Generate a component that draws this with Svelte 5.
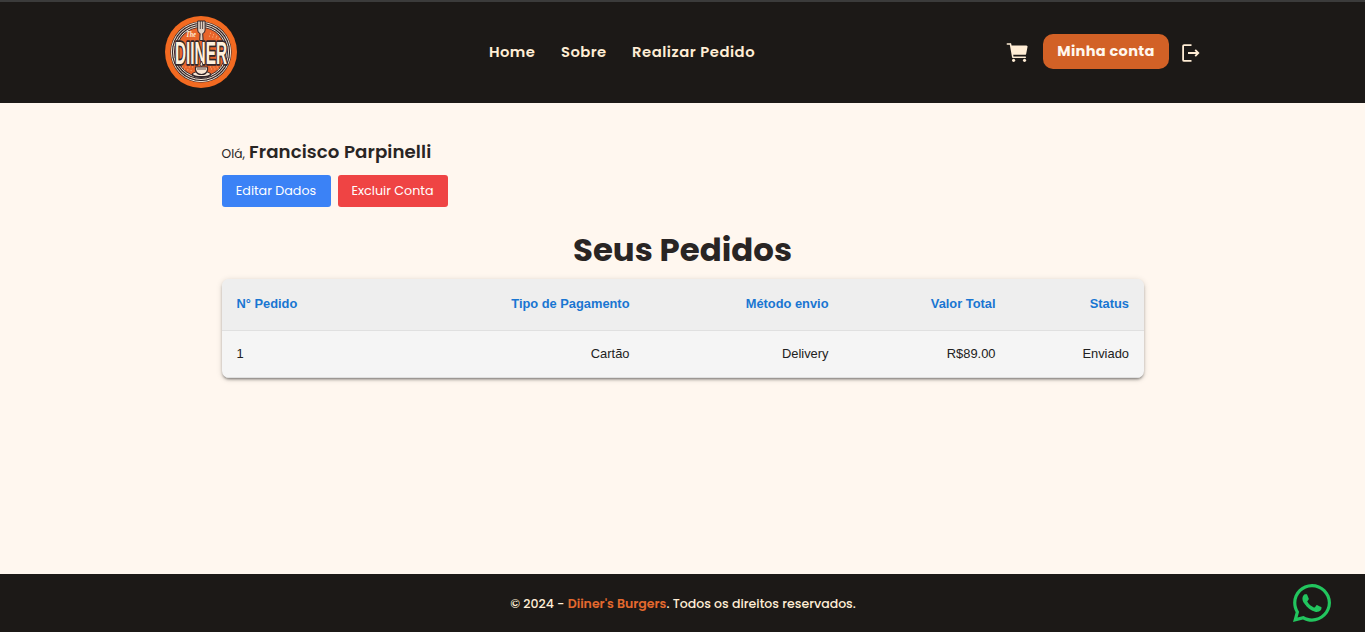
<script>
  const orders = [
    { id: 1, payment: 'Cartão', shipping: 'Delivery', total: 'R$89.00', status: 'Enviado' }
  ];
</script>

<div class="page">
  <header>
    <div class="bar">
      <svg class="logo" viewBox="0 0 72 72" role="img" aria-label="The Diiner">
        <circle cx="36" cy="36" r="36" fill="#f26a21" />
        <circle cx="36" cy="36" r="30.6" fill="#33262a" />
        <g fill="none" stroke="#f5e5d3" stroke-width="1">
          <circle cx="36" cy="36" r="29.6" />
          <circle cx="36" cy="36" r="27.5" />
          <circle cx="36" cy="36" r="25.5" />
        </g>
        <circle cx="36" cy="36" r="24.3" fill="#e9652b" />
        <g fill="none" stroke="#f9b27c" stroke-width="1.2" stroke-dasharray="1 2.4">
          <path d="M45 17l8 4M44 20l11 3M19 53l9 2M46 53h8M17 51h11M45 51h11" />
        </g>
        <text class="script" x="21" y="20.5" textLength="10" lengthAdjust="spacingAndGlyphs">The</text>
        <text class="word" x="10" y="48" textLength="52" lengthAdjust="spacingAndGlyphs">DIINER</text>
        <path d="M32.7 5v9q0 3 2.400 3.500l-.4 7h3.400l-.4-7q2.400-.5 2.400-3.500V5z" fill="#e3d3c4" stroke="#33262a" stroke-width="1" />
        <path d="M35.300 5v8M37.600 5v8" stroke="#33262a" stroke-width=".8" />
        <ellipse cx="36.500" cy="58.500" rx="10" ry="3.500" fill="#33262a" />
        <ellipse cx="36.500" cy="58" rx="8.500" ry="2" fill="#f8e5d2" />
        <path d="M30.500 51h12v3q-1 4.500-6 4.500t-6-4.500z" fill="#f8e5d2" stroke="#33262a" stroke-width="1.200" />
        <path d="M32 53h9" stroke="#33262a" stroke-width=".8" />
        <path d="M36.500 45q-3 3.500 0 6 2.500-2.500 0-6" fill="#f8e5d2" stroke="#33262a" stroke-width=".9" />
      </svg>
      <nav>
        <a class="n1" href="#home">Home</a>
        <a class="n2" href="#sobre">Sobre</a>
        <a class="n3" href="#pedido">Realizar Pedido</a>
      </nav>
      <div class="actions">
        <svg class="cart" viewBox="0 0 512 512" fill="#ffedd5">
          <circle cx="176" cy="416" r="32" /><circle cx="400" cy="416" r="32" />
          <path d="M456.8 120.8a24 24 0 0 0-18.6-8.8H133.9l-6.1-34.8A16 16 0 0 0 112 64H48a16 16 0 0 0 0 32h50.6l45.7 258.8A16 16 0 0 0 160 368h256a16 16 0 0 0 0-32H173.4l-5.6-32h241.6A24 24 0 0 0 433 284.7l28.8-144a24 24 0 0 0-5-19.9z" />
        </svg>
        <button class="account">Minha conta</button>
        <svg class="logout" viewBox="0 0 18 18" fill="none" stroke="#ffedd5" stroke-width="1.8">
          <path d="M9.500 1.100H2.100Q1.100 1.100 1.100 2.100v13.800q0 1 1 1H9.500M6 9h10.200M13.200 5.900 16.300 9l-3.100 3.100" />
        </svg>
      </div>
    </div>
  </header>

  <main>
    <p class="hello"><span class="ola">Olá,</span><strong>Francisco Parpinelli</strong></p>
    <div class="buttons">
      <button class="edit">Editar Dados</button>
      <button class="delete">Excluir Conta</button>
    </div>
    <h1>Seus Pedidos</h1>
    <div class="card">
      <table>
        <thead>
          <tr><th>N° Pedido</th><th>Tipo de Pagamento</th><th>Método envio</th><th>Valor Total</th><th>Status</th></tr>
        </thead>
        <tbody>
          {#each orders as order}
            <tr><td>{order.id}</td><td>{order.payment}</td><td>{order.shipping}</td><td>{order.total}</td><td>{order.status}</td></tr>
          {/each}
        </tbody>
      </table>
    </div>
  </main>

  <footer>
    <p>© 2024 - <b>Diiner's Burgers</b>. Todos os direitos reservados.</p>
    <svg class="whats" viewBox="0 0 448 448" fill="#22c55e">
      <path d="M380.9 65.1C339 23.1 283.2 0 223.9 0 101.500 0 1.900 99.600 1.900 222c0 39.100 10.200 77.300 29.600 111L0 448l117.700-30.900c32.400 17.700 68.900 27 106.100 27h.1c122.300 0 224.100-99.600 224.100-222 0-59.300-25.200-115-67.100-157zM223.900 406.700c-33.200 0-65.700-8.900-94-25.700l-6.700-4-69.800 18.300L72 327.200l-4.400-7c-18.500-29.400-28.200-63.300-28.200-98.200 0-101.700 82.800-184.500 184.600-184.500 49.300 0 95.600 19.200 130.400 54.100 34.800 34.900 56.200 81.200 56.100 130.500 0 101.800-84.900 184.600-186.600 184.600z" />
      <path d="M325.100 268.500c-5.500-2.800-32.800-16.200-37.900-18-5.100-1.900-8.800-2.800-12.500 2.800-3.700 5.600-14.300 18-17.600 21.800-3.200 3.700-6.500 4.200-12 1.400-32.600-16.300-54-29.100-75.500-66-5.700-9.800 5.700-9.100 16.300-30.300 1.800-3.700.9-6.900-.5-9.700-1.400-2.800-12.500-30.100-17.100-41.200-4.500-10.800-9.100-9.300-12.500-9.500-3.200-.2-6.900-.2-10.600-.2s-9.700 1.400-14.800 6.900c-5.100 5.600-19.400 19-19.400 46.300s19.900 53.700 22.600 57.400c2.800 3.700 39.100 59.700 94.800 83.800 35.200 15.200 49 16.500 66.600 13.900 10.700-1.600 32.800-13.400 37.400-26.400 4.600-13 4.600-24.100 3.200-26.400-1.300-2.500-5-3.900-10.500-6.600z" />
    </svg>
  </footer>
</div>

<style>
  :global(body) { margin: 0; }
  .page { height: 632px; display: flex; flex-direction: column; background: #fff7ef; color: #292524; font-family: Poppins, Inter, sans-serif; overflow: hidden; }
  header { box-sizing: border-box; height: 103px; flex: none; background: #1c1917; border-top: 2px solid #3b3b3b; }
  .bar { width: 1036px; height: 100px; margin: 0 auto; display: grid; grid-template-columns: 324.5px 1fr 195px; align-items: center; }
  .logo { width: 72px; height: 72px; display: block; overflow: visible; }
  .word { font: 900 31px "Liberation Sans", sans-serif; fill: #fff0dc; stroke: #33262a; stroke-width: 3.6px; stroke-linejoin: round; paint-order: stroke; }
  .script { font: italic 700 9px "Liberation Serif", serif; fill: #fff0dc; }
  nav { display: flex; gap: 25px; }
  a { color: #ffedd5; text-decoration: none; font-weight: 600; font-size: 14.8px; white-space: nowrap; }
  .n1 { width: 47px; letter-spacing: .4px; }
  .n2 { width: 46px; letter-spacing: .4px; }
  .n3 { width: 124px; letter-spacing: .52px; }
  .actions { display: flex; align-items: center; }
  .cart { width: 25px; height: 25px; margin-left: -1px; margin-right: 13px; margin-top: 1px; }
  button { border: 0; padding: 0; font-family: inherit; color: #fff; white-space: nowrap; }
  .account { width: 126px; height: 35px; margin-bottom: 2px; padding-left: 1px; border-radius: 10px; background: #d26126; color: #fff7ed; font-size: 14.5px; font-weight: 700; letter-spacing: .35px; }
  .logout { width: 18px; height: 18px; margin-left: 13px; margin-top: 2px; }
  main { width: 922px; margin: 0 auto; flex: 1; padding-top: 36px; }
  .hello { margin: 0; height: 26px; line-height: 26px; display: flex; align-items: baseline; white-space: nowrap; }
  .ola { font-size: 12.25px; font-weight: 400; width: 27.500px; }
  strong { font-size: 18.2px; font-weight: 600; letter-spacing: .08px; }
  .buttons { display: flex; gap: 7px; margin-top: 10px; }
  .edit, .delete { height: 32px; border-radius: 3px; font-size: 12.700px; font-weight: 400; }
  .edit { width: 109px; background: #3b82f6; }
  .delete { width: 110px; background: #ef4444; }
  h1 { margin: 22px 0 8px; height: 42px; line-height: 42px; text-align: center; font-size: 32.4px; font-weight: 700; }
  .card { height: 99px; border-radius: 7px; overflow: hidden; background: #f5f5f5; box-shadow: 0 2px 2px -1px #0004, 0 2px 3px #0003, 0 1px 6px #0002; }
  table { width: 922px; table-layout: fixed; border-collapse: collapse; font-family: "Liberation Sans", Arial, sans-serif; font-size: 12.9px; color: #212121; }
  th, td { box-sizing: border-box; padding: 0 14.5px 1px 15px; text-align: right; border-bottom: 1px solid #e0e0e0; white-space: nowrap; }
  th { height: 51px; background: #eee; color: #1976d2; font-weight: 700; font-size: 12.85px; }
  td { height: 47px; font-weight: 400; }
  th:first-child, td:first-child { text-align: left; width: 223px; }
  th:nth-child(2) { width: 199.500px; } th:nth-child(3) { width: 199px; } th:nth-child(4) { width: 167px; } th:nth-child(5) { width: 133.500px; }
  footer { position: relative; height: 58px; flex: none; background: #1c1917; color: #ffedd5; display: flex; align-items: center; justify-content: center; font-size: 12.520px; font-weight: 500; }
  footer p { margin: 2px 0 0 1px; white-space: pre; }
  b { color: #e4692e; font-weight: 600; }
  .whats { position: absolute; right: 34.500px; top: 10px; width: 38px; height: 38px; }
</style>
